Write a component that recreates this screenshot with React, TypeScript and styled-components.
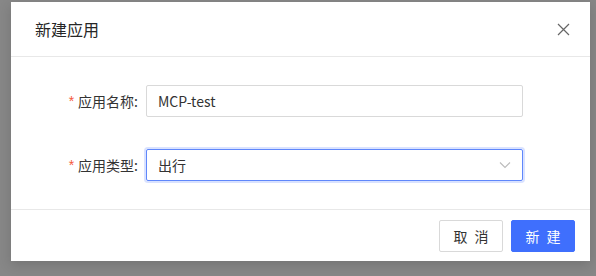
import React from "react";
import styled, { createGlobalStyle } from "styled-components";

const Global = createGlobalStyle`
  html, body { margin: 0; padding: 0; }
  body {
    background: #878787;
    font-family: "Noto Sans CJK SC", "Noto Sans", sans-serif;
    width: 596px;
    height: 276px;
    overflow: hidden;
  }
`;

const Modal = styled.div`
  margin: 2px 0 0 11px;
  width: 579px;
  height: 259px;
  background: #fff;
  display: flex;
  flex-direction: column;
  box-shadow: 0 4px 12px rgba(0, 0, 0, 0.15);
`;

const Header = styled.div`
  height: 54px;
  display: flex;
  align-items: center;
  justify-content: space-between;
  padding: 0 15px 0 24px;
  border-bottom: 1px solid #e8e8e8;
`;

const Title = styled.div`
  font-size: 16px;
  color: #262626;
  line-height: 24px;
`;

const Close = styled.button`
  border: none;
  background: none;
  padding: 0;
  width: 24px;
  height: 24px;
  display: flex;
  align-items: center;
  justify-content: center;
  cursor: pointer;
`;

const Body = styled.div`
  flex: 1;
  display: flex;
  flex-direction: column;
  gap: 32px;
  padding: 28px 0 0;
  border-bottom: 1px solid #e8e8e8;
`;

const Row = styled.div`
  display: flex;
  align-items: center;
  height: 32px;
`;

const Label = styled.label`
  width: 127px;
  flex: none;
  display: flex;
  justify-content: flex-end;
  align-items: center;
  padding-right: 8px;
  font-size: 14px;
  color: #333;
`;

const Star = styled.span`
  color: #f5583d;
  margin-right: 4px;
  font-family: "Liberation Sans", sans-serif;
  font-size: 14px;
`;

const Field = styled.div<{ $focused?: boolean }>`
  width: 377px;
  height: 32px;
  box-sizing: border-box;
  border: 1px solid ${(p) => (p.$focused ? "#5f87fb" : "#d9d9d9")};
  box-shadow: ${(p) => (p.$focused ? "0 0 0 2px rgba(64, 112, 253, 0.2)" : "none")};
  border-radius: 2px;
  display: flex;
  align-items: center;
  justify-content: space-between;
  padding: 0 11px 0 11px;
  font-size: 14px;
  color: #333;
`;

const Footer = styled.div`
  height: 51px;
  display: flex;
  align-items: flex-start;
  justify-content: flex-end;
  gap: 8px;
  padding: 10px 15px 0 0;
  box-sizing: border-box;
`;

const Button = styled.button<{ $primary?: boolean }>`
  width: 64px;
  height: 32px;
  border-radius: 2px;
  font-family: "Noto Sans CJK SC", "Noto Sans", sans-serif;
  font-size: 14px;
  letter-spacing: 2px;
  padding: 0 0 0 2px;
  border: 1px solid ${(p) => (p.$primary ? "#3f6ffd" : "#d9d9d9")};
  background: ${(p) => (p.$primary ? "#3f6ffd" : "#fff")};
  color: ${(p) => (p.$primary ? "#fff" : "#333")};
  cursor: pointer;
`;

export default function App() {
  return (
    <>
      <Global />
      <Modal>
        <Header>
          <Title>新建应用</Title>
          <Close aria-label="close">
            <svg width="13" height="13" viewBox="0 0 13 13">
              <path d="M1 1L12 12M12 1L1 12" stroke="#666" strokeWidth="1.2" />
            </svg>
          </Close>
        </Header>
        <Body>
          <Row>
            <Label>
              <Star>*</Star>应用名称:
            </Label>
            <Field>MCP-test</Field>
          </Row>
          <Row>
            <Label>
              <Star>*</Star>应用类型:
            </Label>
            <Field $focused>
              出行
              <svg width="12" height="8" viewBox="0 0 12 8">
                <path d="M1 1.5L6 6.5L11 1.5" stroke="#bbb" strokeWidth="1.1" fill="none" />
              </svg>
            </Field>
          </Row>
        </Body>
        <Footer>
          <Button>取 消</Button>
          <Button $primary>新 建</Button>
        </Footer>
      </Modal>
    </>
  );
}
